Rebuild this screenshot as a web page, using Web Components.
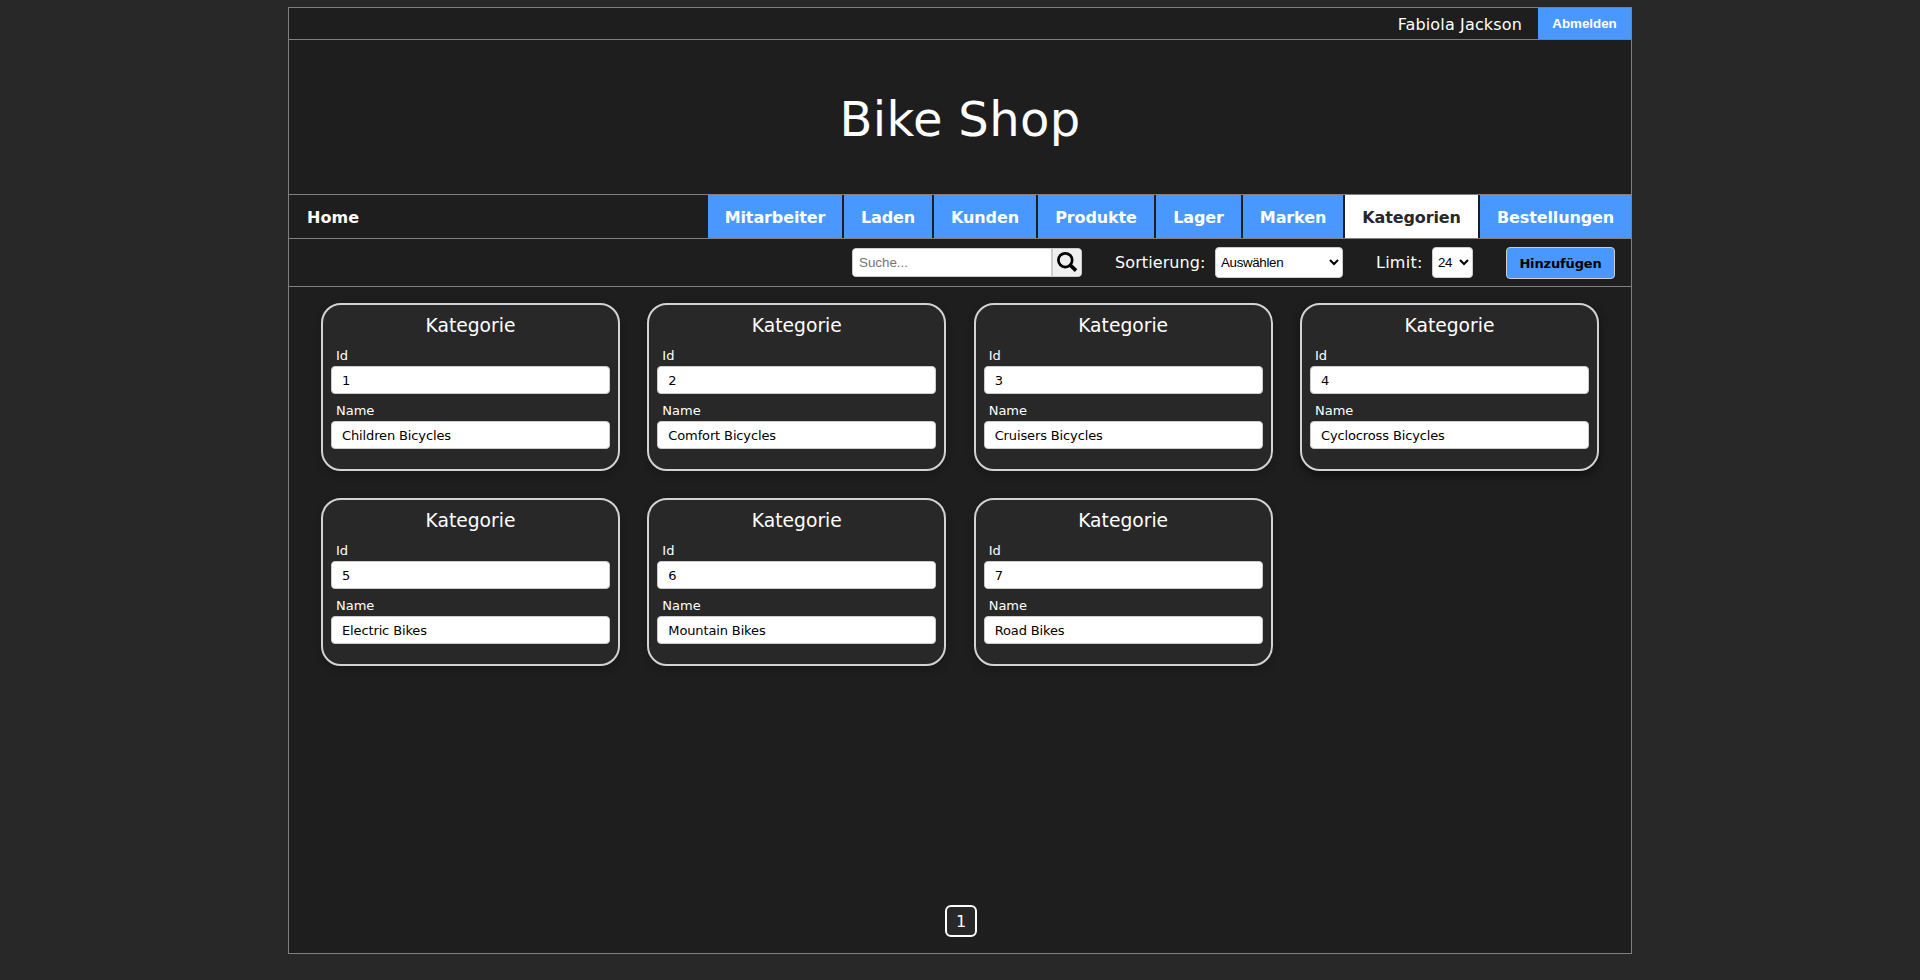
<!DOCTYPE html>
<html lang="de">
<head>
<meta charset="utf-8">
<title>Bike Shop</title>
<style>
  body { margin: 0; background: #282828; color: #fff; font: 16px/20px "DejaVu Sans", sans-serif; }
</style>
</head>
<body>
<bike-shop></bike-shop>
<script>
const define = (name, html, setup) => customElements.define(name, class extends HTMLElement {
  connectedCallback() {
    if (this.shadowRoot) return;
    this.attachShadow({ mode: 'open' }).innerHTML = html;
    if (setup) setup(this, this.shadowRoot);
  }
});

define('user-bar', `
<style>
  :host { display: flex; justify-content: flex-end; height: 31px; border-bottom: 1px solid gray; }
  span { line-height: 33px; padding-right: 16px; letter-spacing: .15px; }
  button { width: 93px; border: 0; padding: 0; background: #4898ff; color: #fff; font: bold 13.333px "Liberation Sans", sans-serif; }
</style>
<span><slot></slot></span><button>Abmelden</button>`);

define('shop-title', `
<style>
  :host { display: block; height: 154px; border-bottom: 1px solid gray; text-align: center; font-size: 48px; line-height: 159px; letter-spacing: .35px; }
</style>
<slot></slot>`);

define('nav-item', `
<style>
  :host { display: block; box-sizing: border-box; background: #4898ff; color: #fff; text-align: center; white-space: nowrap; }
  :host([active]) { background: #fff; color: #282828; }
  :host([plain]) { background: none; text-align: left; padding-left: 18px; letter-spacing: .1px; }
</style>
<slot></slot>`);

define('nav-bar', `
<style>
  :host { display: grid; grid-template-columns: 417px 134px 88px 102px 116px 85px 100px 133px 151px; column-gap: 2px;
    height: 43px; line-height: 45px; border-bottom: 1px solid gray; font-weight: bold; letter-spacing: -.12px; }
  nav-item { height: 43px; }
</style>
<nav-item plain>Home</nav-item><nav-item>Mitarbeiter</nav-item><nav-item>Laden</nav-item><nav-item>Kunden</nav-item><nav-item>Produkte</nav-item><nav-item>Lager</nav-item><nav-item>Marken</nav-item><nav-item active>Kategorien</nav-item><nav-item>Bestellungen</nav-item>`);

define('search-box', `
<style>
  :host { display: flex; box-sizing: border-box; width: 230px; height: 29px; border: 1px solid #ccc; border-radius: 4px; overflow: hidden; background: #fff; }
  input { flex: 1; min-width: 0; border: 0; padding: 0 5px 1px 6px; font: 13.333px "Liberation Sans", sans-serif; }
  input::placeholder { color: #757575; }
  button { width: 30px; padding: 0; border: 0; border-left: 2px solid #ccc; background: #efefef; display: block; }
  svg { display: block; }
</style>
<input placeholder="Suche..."><button aria-label="Suchen"><svg width="28" height="27" viewBox="0 0 28 27" fill="none" stroke="#000">
<circle cx="12.3" cy="11.2" r="6.9" stroke-width="2.7"/><path d="M17 15.9 23 21.6" stroke-width="3.6"/></svg></button>`);

define('labelled-select', `
<style>
  :host { display: flex; align-items: center; justify-content: space-between; }
  span { padding-top: 1px; white-space: nowrap; }
  select { box-sizing: border-box; height: 31px; border: 1px solid #ccc; border-radius: 4px; background: #fff; color: #000; font: 13.333px "Liberation Sans", sans-serif; padding: 0 0 0 1px; letter-spacing: -.33px; }
</style>
<span></span><select><option></option></select>`, (el, root) => {
  root.querySelector('span').textContent = el.getAttribute('label');
  root.querySelector('option').textContent = el.getAttribute('value');
  root.querySelector('select').style.width = el.getAttribute('size') + 'px';
});

define('tool-bar', `
<style>
  :host { display: flex; justify-content: flex-end; align-items: center; height: 47px; padding: 0 16px 0 0; border-bottom: 1px solid gray; }
  search-box, labelled-select { margin-right: 33px; }
  .sort { width: 228px; letter-spacing: .1px; }
  .limit { width: 97px; letter-spacing: .25px; }
  button { box-sizing: border-box; width: 109px; height: 32px; margin-top: 1px; padding: 0; border: 1px solid #ccc; border-radius: 4px; background: #4898ff; color: #000; font: bold 13px "DejaVu Sans", sans-serif; letter-spacing: -.15px; }
</style>
<search-box></search-box>
<labelled-select class="sort" label="Sortierung:" value="Auswählen" size="128"></labelled-select>
<labelled-select class="limit" label="Limit:" value="24" size="41"></labelled-select>
<button>Hinzufügen</button>`);

define('form-field', `
<style>
  :host { display: block; font-size: 13px; line-height: 17px; }
  label { display: block; height: 19px; padding-left: 5px; }
  input { display: block; box-sizing: border-box; width: 100%; height: 28px; border: 1px solid #ccc; border-radius: 4px; background: #fff; color: #000; padding: 0 10px; font: 13px "DejaVu Sans", sans-serif; letter-spacing: -.13px; }
</style>
<label><slot></slot></label><input>`);

define('category-card', `
<style>
  :host { display: block; box-sizing: border-box; height: 168px; border: 2px solid #d3d3d3; border-radius: 20px; padding: 8px; background: #282828; box-shadow: 0 4px 8px rgba(0,0,0,.2); }
  :host([raised]) { box-shadow: 0 4px 8px rgba(0,0,0,.5); }
  h3 { margin: 0 0 11px; height: 23px; font-size: 18.72px; line-height: 25px; font-weight: normal; text-align: center; }
  form-field + form-field { margin-top: 8px; }
</style>
<h3>Kategorie</h3><form-field>Id</form-field><form-field>Name</form-field>`, (el, root) => {
  const values = [el.getAttribute('number'), el.getAttribute('name')];
  root.querySelectorAll('form-field').forEach((field, i) => {
    field.shadowRoot.querySelector('input').value = values[i];
  });
});

define('category-grid', `
<style>
  :host { display: grid; grid-template-columns: repeat(4, 299px); justify-content: space-between; align-content: start; row-gap: 27px; padding: 16px 32px 0; flex: 1; }
</style>`, (el, root) => {
  ['Children Bicycles', 'Comfort Bicycles', 'Cruisers Bicycles', 'Cyclocross Bicycles', 'Electric Bikes', 'Mountain Bikes', 'Road Bikes'].forEach((name, i) => {
    const card = document.createElement('category-card');
    card.setAttribute('number', i + 1);
    card.setAttribute('name', name);
    card.toggleAttribute('raised', i === 3);
    root.append(card);
  });
});

define('page-number', `
<style>
  :host { display: block; box-sizing: border-box; width: 32px; height: 32px; border: 2px solid #fff; border-radius: 6px; background: #282828; text-align: center; line-height: 30px; }
</style>
<slot></slot>`);

define('bike-shop', `
<style>
  :host { display: flex; flex-direction: column; box-sizing: border-box; width: 1344px; height: 947px; margin: 7px auto 0; border: 1px solid gray; background: #1e1e1e; }
  page-number { margin: 0 0 16px 656px; }
</style>
<user-bar>Fabiola Jackson</user-bar>
<shop-title>Bike Shop</shop-title>
<nav-bar></nav-bar>
<tool-bar></tool-bar>
<category-grid></category-grid>
<page-number>1</page-number>`);
</script>
</body>
</html>
